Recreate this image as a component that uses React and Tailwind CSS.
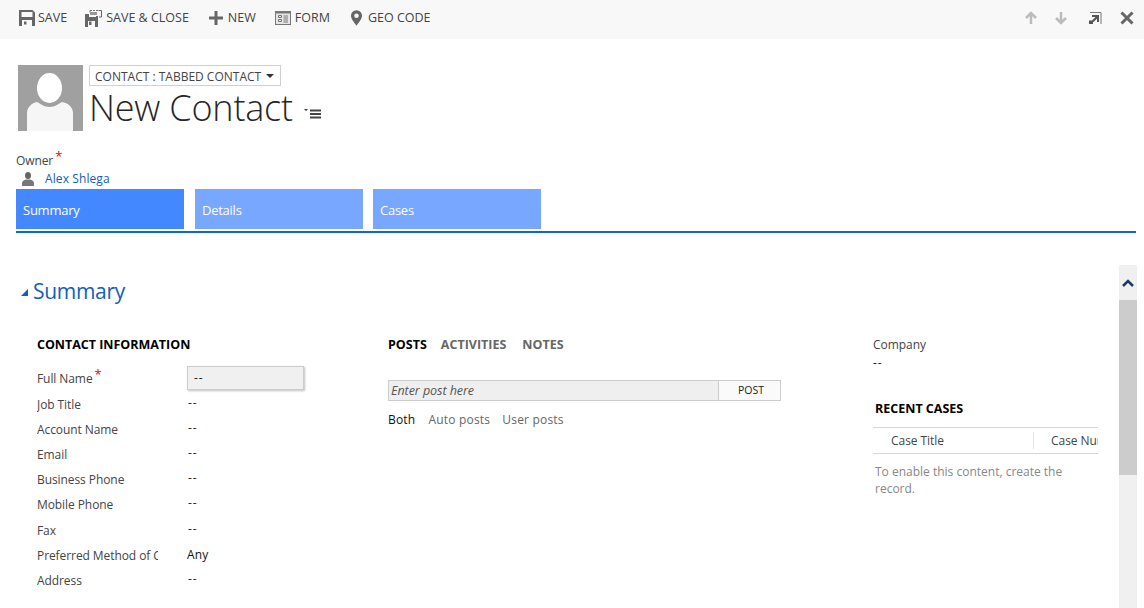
import React from "react";

function SaveIcon() {
  return (
    <svg width="16" height="16" viewBox="0 0 16 16" className="shrink-0">
      <path fillRule="evenodd" fill="#666" d="M0 0h13.500L16 2.500V16H0zM2.500 2v5h11V2zM3 10v6h10v-6z" />
      <rect x="5" y="11.500" width="2.500" height="3" fill="#666" />
    </svg>
  );
}
function SaveCloseIcon() {
  return (
    <svg width="17" height="17" viewBox="0 0 17 17" className="shrink-0">
      <path fillRule="evenodd" fill="#666" d="M0 4h4v3h7V6h2v11H0zM3 11v6h7v-6z" />
      <rect x="4" y="11.500" width="2.500" height="3.500" fill="#666" />
      <path d="M5 2.500V0.500h2M8 0.500h2M11 0.500h2" fill="none" stroke="#777" strokeWidth="1" />
      <rect x="5" y="2" width="7" height="3" fill="#999" />
      <path d="M13.500 0.500h3V7H14" fill="none" stroke="#666" strokeWidth="1" />
    </svg>
  );
}
function PlusIcon() {
  return (
    <svg width="14" height="14" viewBox="0 0 14 14" className="shrink-0">
      <path fill="#666" d="M5.500 0h3v5.500H14v3H8.500V14h-3V8.500H0v-3h5.500z" />
    </svg>
  );
}
function FormIcon() {
  return (
    <svg width="16" height="14" viewBox="0 0 16 14" className="shrink-0">
      <rect x="0.500" y="0.500" width="15" height="13" fill="#e6e6e6" stroke="#777" />
      <rect x="1" y="1" width="14" height="1.500" fill="#777" />
      <path d="M3.500 4.500h3v2h-3zM3.500 8.500h3v2h-3z" fill="none" stroke="#777" strokeWidth="1" />
      <path d="M8.500 5h4.500M8.500 7h4.500M8.500 9h4.500M8.500 11h4.500" stroke="#777" strokeWidth="1" />
    </svg>
  );
}
function PinIcon() {
  return (
    <svg width="11" height="16" viewBox="0 0 12 17" className="shrink-0">
      <path fillRule="evenodd" fill="#666" d="M6 0a6 6 0 0 1 6 6c0 3.500-3.500 7.500-6 11C3.500 13.500 0 9.500 0 6a6 6 0 0 1 6-6zM6 3.500a2.500 2.500 0 1 0 0 5 2.500 2.500 0 0 0 0-5z" />
    </svg>
  );
}
function ArrowUp({ down }) {
  return (
    <svg width="14" height="14" viewBox="0 0 14 14" className={down ? "rotate-180" : ""}>
      <path d="M7 13V2M2 7l5-5 5 5" fill="none" stroke="#bbb" strokeWidth="2.500" />
    </svg>
  );
}
function PopoutIcon() {
  return (
    <svg width="14" height="14" viewBox="0 0 14 14">
      <path d="M2 1.500h11V13" fill="none" stroke="#777" strokeWidth="1" />
      <path d="M4 4h7v7H9V7.500L5.500 11 4 9.500 7.500 6H4z" fill="#555" />
      <rect x="1" y="9.500" width="4" height="3.500" fill="#555" />
    </svg>
  );
}
function CloseIcon() {
  return (
    <svg width="14" height="14" viewBox="0 0 14 14">
      <path d="M1.500 1.500l11 11M12.500 1.500l-11 11" fill="none" stroke="#666" strokeWidth="3" />
    </svg>
  );
}
function Avatar() {
  return (
    <svg width="65" height="66" viewBox="0 0 65 66" className="shrink-0">
      <rect width="65" height="66" fill="#a0a0a0" />
      <ellipse cx="31.500" cy="23" rx="12.500" ry="15" fill="#fff" />
      <path d="M9 66V48c0-6 5-10 10-11 4 2 7 5 12.500 5S40 39 44 37c6 1 11 5 11 11v18z" fill="#f6f6f6" />
    </svg>
  );
}
function ViewMenu() {
  return (
    <svg width="18" height="12" viewBox="0 0 18 12" className="shrink-0">
      <path d="M0 1h4L2 3z" fill="#333" />
      <path d="M6 2.500h11M6 6h11M6 9.500h11" stroke="#444" strokeWidth="2" />
    </svg>
  );
}
function UserIcon() {
  return (
    <svg width="12" height="14" viewBox="0 0 12 14" className="shrink-0">
      <ellipse cx="6" cy="3.500" rx="3" ry="3.500" fill="#666" />
      <path d="M0 14v-3c0-2 2-3 4-3.500h4c2 .5 4 1.500 4 3.500v3z" fill="#777" />
    </svg>
  );
}

function ToolButton({ icon, label, className }) {
  return (
    <div className={"flex items-center " + className}>
      {icon}
      <span className="text-[12.500px] text-[#444444] whitespace-nowrap">{label}</span>
    </div>
  );
}

function Req() {
  return <span className="text-[#ee0000] text-[13px] leading-none relative -top-[4px] ml-[2px]">*</span>;
}

function Row({ label, value, req, box, className = "" }) {
  return (
    <div className={"flex items-center h-[25px] " + className}>
      <div className="w-[150px] shrink-0 whitespace-nowrap text-[12px] text-[#444444] tracking-[-0.08px]">
        <div className="w-[121px] overflow-x-clip">{label}{req && <Req />}</div>
      </div>
      {box ? (
        <div className="w-[117px] h-[24px] flex items-center pl-[6px] -mt-[1px] bg-[#f1f0f0] border border-[#cccccc] shadow-[1px_1px_2px_rgba(0,0,0,0.25)] text-[12px] text-[#222222] tracking-[1px]">--</div>
      ) : value === "--" ? (
        <div className="text-[12px] text-[#222222] -mt-[3px] pl-[1px] tracking-[1px]">--</div>
      ) : (
        <div className="text-[12px] text-[#111111] -mt-[1px] tracking-[0.1px]">{value}</div>
      )}
    </div>
  );
}

function Tab({ label, active, className = "" }) {
  return (
    <div className={"w-[168px] h-[40px] flex items-center pl-[7px] pt-[4px] text-[13px] text-white tracking-[-0.25px] " + (active ? "bg-[#4488ff] " : "bg-[#77a7ff] ") + className}>
      {label}
    </div>
  );
}

export default function App() {
  return (
    <div className="w-[1144px] h-[608px] overflow-hidden bg-white flex flex-col font-['Open_Sans',sans-serif]">
      <div className="h-[39px] shrink-0 bg-[#f8f8f8] flex items-center pl-[19px] pr-[10px] pb-[3px]">
        <ToolButton icon={<SaveIcon />} label="SAVE" className="gap-[3px]" />
        <ToolButton icon={<SaveCloseIcon />} label="SAVE & CLOSE" className="ml-[18px] gap-[4px]" />
        <ToolButton icon={<PlusIcon />} label="NEW" className="ml-[20px] gap-[5px]" />
        <ToolButton icon={<FormIcon />} label="FORM" className="ml-[19px] gap-[4px]" />
        <ToolButton icon={<PinIcon />} label="GEO CODE" className="ml-[21px] gap-[6px]" />
        <div className="ml-auto flex items-center gap-[16px]">
          <ArrowUp />
          <ArrowUp down />
          <div className="ml-[4px]"><PopoutIcon /></div>
          <div className="ml-[2px]"><CloseIcon /></div>
        </div>
      </div>

      <div className="flex pl-[18px] pt-[26px] gap-[6px] h-[92px] shrink-0">
        <Avatar />
        <div className="flex flex-col">
          <div className="w-[192px] h-[21px] border border-[#d0d0d0] flex items-center pl-[5px] pt-[2px] text-[12px] text-[#444444] whitespace-nowrap">
            CONTACT : TABBED CONTACT
            <span className="ml-[5px] -mt-[2px] w-0 h-0 border-x-[4px] border-x-transparent border-t-[4px] border-t-[#333333]" />
          </div>
          <div className="flex items-center">
            <span className="text-[36px] leading-[44px] font-light text-[#262626] tracking-[-0.2px] whitespace-nowrap">New Contact</span>
            <span className="ml-[11px] mt-[11px]"><ViewMenu /></span>
          </div>
        </div>
      </div>

      <div className="pl-[16px] shrink-0 pt-[21px]">
        <div className="h-[17px] flex items-center text-[12px] text-[#444444] tracking-[-0.1px]">Owner<Req /></div>
        <div className="h-[19px] flex items-center pl-[6px] text-[12px] text-[#1160b7] tracking-[0.1px]">
          <UserIcon />
          <span className="ml-[11px]">Alex Shlega</span>
        </div>
      </div>

      <div className="mt-[1px] mr-[8px] ml-[16px] shrink-0 border-b-[2px] border-[#0f68c4] pb-[2px] flex gap-[10px]">
        <Tab label="Summary" active />
        <Tab label="Details" className="ml-[1px]" />
        <Tab label="Cases" />
      </div>

      <div className="flex-1 flex min-h-0 pt-[32px]">
        <div className="w-[1119px] shrink-0 min-w-0 pt-[12px]">
          <div className="flex items-center pl-[21px] h-[30px]">
            <span className="w-0 h-0 border-l-[7px] border-l-transparent border-b-[7px] border-b-[#1160b7]" />
            <span className="ml-[5px] text-[21px] text-[#1160b7] tracking-[-0.3px]">Summary</span>
          </div>
          <div className="flex pl-[37px] pt-[28px]">
            <div className="w-[351px] shrink-0">
              <div className="text-[12.500px] font-bold text-black h-[20px] leading-[20px] tracking-[-0.02px] whitespace-nowrap">CONTACT INFORMATION</div>
              <div className="mt-[11px]">
                <Row label="Full Name" req box />
                <Row label="Job Title" value="--" className="mt-[1px]" />
                <Row label="Account Name" value="--" />
                <Row label="Email" value="--" />
                <Row label="Business Phone" value="--" />
                <Row label="Mobile Phone" value="--" />
                <Row label="Fax" value="--" className="mt-[1px]" />
                <Row label="Preferred Method of Contact" value="Any" />
                <Row label="Address" value="--" />
              </div>
            </div>
            <div className="w-[485px] shrink-0">
              <div className="flex gap-[14px] text-[12.500px] font-bold h-[20px] leading-[20px]">
                <span className="text-black">POSTS</span>
                <span className="text-[#666666]">ACTIVITIES</span>
                <span className="ml-[2px] text-[#666666]">NOTES</span>
              </div>
              <div className="mt-[25px] w-[393px] h-[21px] flex border border-[#cccccc]">
                <div className="flex-1 bg-[#efefef] pl-[2px] pt-[2px] flex items-center text-[12.500px] italic text-[#555555] tracking-[-0.05px]">Enter post here</div>
                <div className="w-[62px] border-l border-[#cccccc] bg-[#fafafa] flex items-center justify-center pl-[3px] text-[10.500px] text-[#222222]">POST</div>
              </div>
              <div className="mt-[10px] flex gap-[12px] text-[12px] tracking-[0.2px] text-[#666666]">
                <span className="mr-[1px] text-[#111111]">Both</span>
                <span>Auto posts</span>
                <span>User posts</span>
              </div>
            </div>
            <div className="w-[225px] shrink-0 overflow-hidden">
              <div className="text-[12px] text-[#444444] h-[18px] leading-[18px] mt-[1px] tracking-[-0.05px]">Company</div>
              <div className="text-[12px] text-[#222222] h-[18px] leading-[18px] tracking-[1px]">--</div>
              <div className="mt-[27px] pl-[2px] text-[12.500px] font-bold text-black h-[20px] leading-[20px] whitespace-nowrap">RECENT CASES</div>
              <div className="mt-[8px] h-[27px] border-y border-[#d6d6d6] flex items-center whitespace-nowrap text-[12px] text-[#444444] tracking-[-0.05px]">
                <span className="pl-[18px] w-[161px] shrink-0 border-r border-[#e4e4e4] h-[17px] leading-[17px]">Case Title</span>
                <span className="pl-[17px]">Case Number</span>
              </div>
              <div className="mt-[9px] pl-[2px] pr-[30px] text-[12px] leading-[17px] text-[#888888]">To enable this content, create the record.</div>
            </div>
          </div>
        </div>
        <div className="w-[18px] shrink-0 bg-[#f0f0f0] flex flex-col">
          <div className="h-[35px] flex items-center justify-center">
            <svg width="12" height="8" viewBox="0 0 12 8"><path d="M1 7l5-5 5 5" fill="none" stroke="#1c3a66" strokeWidth="2.500" /></svg>
          </div>
          <div className="h-[175px] bg-[#cccccc]" />
        </div>
      </div>
    </div>
  );
}
